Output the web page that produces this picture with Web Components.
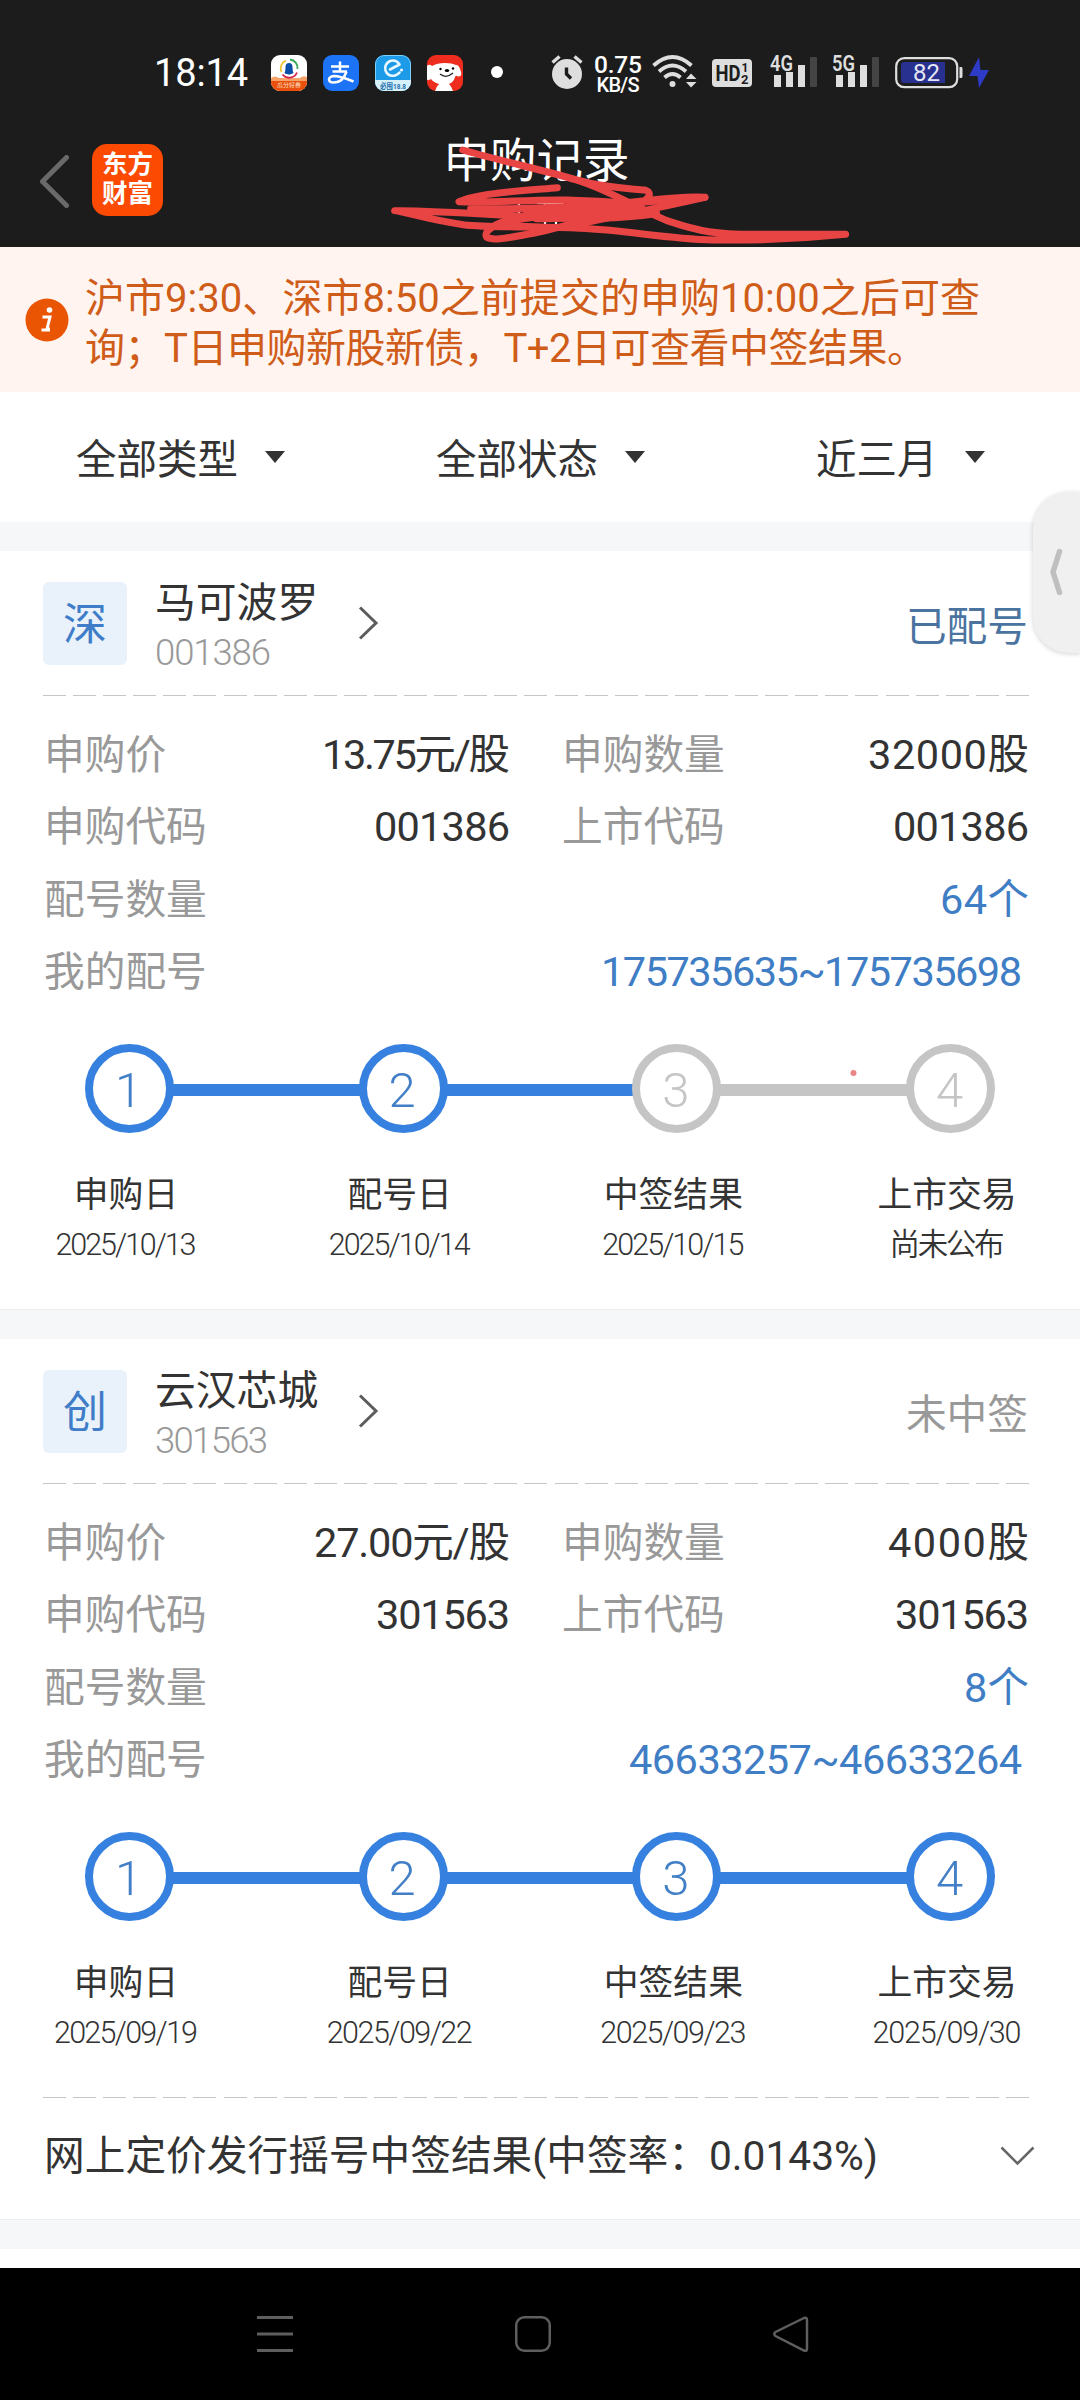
<!DOCTYPE html>
<html lang="zh-CN">
<head>
<meta charset="utf-8">
<title>申购记录</title>
<style>
    body {
        margin: 0;
        width: 1080px;
        height: 2400px;
        overflow: hidden;
        position: relative;
        background: #fff;
        color: #333;
        font-family: Roboto, "Noto Sans CJK SC", sans-serif;
    }
</style>
</head>
<body>
<status-bar></status-bar>
<app-header>申购记录</app-header>
<notice-bar>
    <fit-text w="895">沪市9:30、深市8:50之前提交的申购10:00之后可查</fit-text>
    <fit-text w="842">询；T日申购新股新债，T+2日可查看中签结果。</fit-text>
</notice-bar>
<filter-bar>
    <filter-item style="margin-left: 76px">全部类型</filter-item>
    <filter-item style="margin-left: 151px">全部状态</filter-item>
    <filter-item style="margin-left: 171px">近三月</filter-item>
</filter-bar>
<stock-card market="深" code="001386" code-width="116" status="已配号" status-color="#4a749f">
    马可波罗
    <field-item slot="fields" label="申购价"><fit-text w="188">13.75元/股</fit-text></field-item>
    <field-item slot="fields" label="申购数量"><fit-text w="161">32000股</fit-text></field-item>
    <field-item slot="fields" label="申购代码"><fit-text w="136">001386</fit-text></field-item>
    <field-item slot="fields" label="上市代码"><fit-text w="136">001386</fit-text></field-item>
    <field-item slot="fields" label="配号数量" wide><fit-text w="89">64个</fit-text></field-item>
    <field-item slot="fields" label="我的配号" wide inset><fit-text w="421">175735635~175735698</fit-text></field-item>
    <step-item slot="steps" number="1" label="申购日" line><fit-text w="141">2025/10/13</fit-text></step-item>
    <step-item slot="steps" number="2" label="配号日" line><fit-text w="142">2025/10/14</fit-text></step-item>
    <step-item slot="steps" number="3" label="中签结果" line pending><fit-text w="142">2025/10/15</fit-text></step-item>
    <step-item slot="steps" number="4" label="上市交易" pending><fit-text w="115">尚未公布</fit-text></step-item>
</stock-card>
<stock-card market="创" code="301563" code-width="113" status="未中签" status-color="#999">
    云汉芯城
    <field-item slot="fields" label="申购价"><fit-text w="196">27.00元/股</fit-text></field-item>
    <field-item slot="fields" label="申购数量"><fit-text w="141">4000股</fit-text></field-item>
    <field-item slot="fields" label="申购代码"><fit-text w="134">301563</fit-text></field-item>
    <field-item slot="fields" label="上市代码"><fit-text w="134">301563</fit-text></field-item>
    <field-item slot="fields" label="配号数量" wide><fit-text w="65">8个</fit-text></field-item>
    <field-item slot="fields" label="我的配号" wide inset><fit-text w="393">46633257~46633264</fit-text></field-item>
    <step-item slot="steps" number="1" label="申购日" line><fit-text w="144">2025/09/19</fit-text></step-item>
    <step-item slot="steps" number="2" label="配号日" line><fit-text w="146">2025/09/22</fit-text></step-item>
    <step-item slot="steps" number="3" label="中签结果" line><fit-text w="146">2025/09/23</fit-text></step-item>
    <step-item slot="steps" number="4" label="上市交易"><fit-text w="149">2025/09/30</fit-text></step-item>
    <result-row slot="footer"><fit-text w="834">网上定价发行摇号中签结果(中签率：0.0143%)</fit-text></result-row>
</stock-card>
<nav-bar></nav-bar>
<side-tab></side-tab>
<red-marks></red-marks>

<script>
// small helper, every element does the same thing
function define (name, html, setup) {
    const template = document.createElement ("template");
    template.innerHTML = html;
    customElements.define (name, class extends HTMLElement {
        constructor () {
            super ();
            this.attachShadow ({mode: "open"});
            this.shadowRoot.appendChild (template.content.cloneNode (true));
        }

        connectedCallback () {
            if (setup) setup (this, this.shadowRoot);
        }
    });
}

define ("status-bar", `
<style>
    :host {
        display: flex;
        height: 100px;
        padding: 44px 0 0 154px;
        box-sizing: border-box;
        background: #1c1c1c;
        color: #fff;
        align-items: flex-start;
    }
    .time { width: 117px; font-size: 38px; line-height: 58px; }
    .apps { display: flex; gap: 16px; margin-top: 11px; }
    .dot { width: 12px; height: 12px; border-radius: 50%; background: #fff; margin: 22px 48px 0 28px; }
    .speed { display: flex; flex-direction: column; align-items: center; width: 48px; margin: 9px 0 0 9px; font-weight: 500; }
    .speed span:first-child { font-size: 24.5px; line-height: 23px; }
    .speed span:last-child { font-size: 20px; line-height: 19px; }
    .alarm { margin-top: 10px; }
    .wifi { margin: 9px 0 0 10px; }
    .hd { margin: 15px 0 0 14px; }
    .signal { margin: 10px 0 0 18px; }
    .signal + .signal { margin-left: 14px; }
    .battery { margin: 11px 0 0 15px; }
    .bolt { margin: 13px 0 0 6px; }
    svg { display: block; flex: none; overflow: visible; }
</style>
<div class="time"><fit-text w="94">18:14</fit-text></div>
<div class="apps">
    <svg width="36" height="36" viewBox="0 0 36 36">
        <clipPath id="a"><rect width="36" height="36" rx="9"/></clipPath>
        <g clip-path="url(#a)">
            <rect width="36" height="36" fill="#fff"/>
            <path d="M0 23Q4 20 8 23L29 23Q32 20 36 22V36H0Z" fill="#f4a36b"/>
            <path d="M0 26H36V36H0Z" fill="#e9500d"/>
            <g fill="none" stroke-width="1.800">
                <path d="M10.500 17A8.500 8.500 0 0 1 15 5.500" stroke="#f1c232"/>
                <path d="M19 4.500A8.500 8.500 0 0 1 26.500 14" stroke="#39a85b"/>
                <path d="M11.500 19.500A8.500 8.500 0 0 0 26 17.500" stroke="#d9264b"/>
            </g>
            <path d="M13.500 18Q14.500 16 14.500 12Q14.500 8 18 8T21.500 12Q21.500 16 22.500 18Q21 19 20 19Q18 20 16 19Q14 19 13.500 18Z" fill="#0b4ea8"/>
            <text x="18" y="32" font-size="6" fill="#ffe2c8" text-anchor="middle">瓜分好券</text>
        </g>
    </svg>
    <svg width="36" height="36" viewBox="0 0 36 36">
        <rect width="36" height="36" rx="9" fill="#1d73f5"/>
        <g fill="none" stroke="#fff" stroke-width="2.500">
            <path d="M8 11.500H26M17 6.500V17M9.500 16.500H24"/>
            <path d="M23.500 16.500Q20 27.500 11 27.500Q6 27.500 6 24.500Q6.500 21 12 21Q18 21.500 30.500 26.500"/>
        </g>
    </svg>
    <svg width="36" height="36" viewBox="0 0 36 36">
        <clipPath id="b"><rect width="36" height="36" rx="9"/></clipPath>
        <g clip-path="url(#b)">
            <rect width="36" height="36" fill="#1d9be8"/>
            <rect x=".5" y=".5" width="35" height="35" rx="8.500" fill="none" stroke="#7fd0f6"/>
            <rect y="25" width="36" height="11" fill="#d7f1fb"/>
            <path d="M15 14.500L24.500 9.500Q21 4 15 6Q9 9 10.500 15.500Q13 22 20 20.500Q23 19.500 24.500 17.500" fill="none" stroke="#e9f8ff" stroke-width="2.600" stroke-linecap="round" stroke-linejoin="round"/>
            <circle cx="26.500" cy="15" r="1.600" fill="#e9f8ff"/>
            <text x="5" y="33.500" font-size="8" font-weight="700" fill="#1b6fae" textLength="26" lengthAdjust="spacingAndGlyphs">必囤18.8</text>
        </g>
    </svg>
    <svg width="36" height="36" viewBox="0 0 36 36">
        <clipPath id="c"><rect width="36" height="36" rx="9"/></clipPath>
        <g clip-path="url(#c)">
            <rect width="36" height="36" fill="#ee2d1e"/>
            <path d="M8 36Q9 32 12 29Q6 27 4 24Q0 27-1 22V12Q2 8 5 11Q10 8 18 8Q25 8 29 10Q32 9 34 17Q35 22 31 21.500Q29 20 28 22Q27 27 22 29Q25 32 26 36Z" fill="#fff"/>
            <circle cx="13.500" cy="14" r="1.200"/><circle cx="26" cy="13.500" r="1.200"/>
            <ellipse cx="20" cy="15.500" rx="2.200" ry="1.600"/>
            <path d="M13 19Q19 24 26 18" fill="none" stroke="#222" stroke-width="1.200"/>
        </g>
    </svg>
</div>
<div class="dot"></div>
<svg class="alarm" width="34" height="36" viewBox="0 0 34 36">
    <circle cx="16" cy="20" r="15" fill="#dedede"/>
    <path d="M1.500 8.500L8.500 2.500M23.500 2.500L30.500 8.500" stroke="#dedede" stroke-width="3.400"/>
    <path d="M15.500 13.500V20L20 24.500" fill="none" stroke="#1c1c1c" stroke-width="3.400"/>
</svg>
<div class="speed"><span><fit-text w="48">0.75</fit-text></span><span><fit-text w="43">KB/S</fit-text></span></div>
<svg class="wifi" width="46" height="36" viewBox="0 0 46 36">
    <g fill="none" stroke="#dedede" stroke-width="3.800">
        <path d="M1.500 12.500Q20.500-4.500 39.500 12.500"/>
        <path d="M7 18.500Q20.500 6.500 34 18.500"/>
        <path d="M12.500 24.500Q20.500 17.500 28.500 24.500"/>
    </g>
    <circle cx="20.500" cy="31" r="3" fill="#dedede"/>
    <path d="M34 26L39 20.500L44.500 26ZM34 29L39 34.500L44.500 29Z" fill="#dedede"/>
</svg>
<svg class="hd" width="40" height="28" viewBox="0 0 40 28">
    <rect width="40" height="28" rx="4" fill="#dedede"/>
    <text x="3.500" y="22" font-size="22" font-weight="700" fill="#1c1c1c" textLength="25" lengthAdjust="spacingAndGlyphs">HD</text>
    <text x="29.500" y="13" font-size="12" font-weight="700" fill="#1c1c1c">1</text>
    <text x="29" y="24.500" font-size="13" font-weight="700" fill="#1c1c1c">2</text>
</svg>
<svg class="signal" width="48" height="36" viewBox="0 0 48 36">
    <text x="0" y="16.500" font-size="21.500" font-weight="600" fill="#dedede" textLength="23" lengthAdjust="spacingAndGlyphs">4G</text>
    <path d="M4 21H11V33H4ZM16 18H23V33H16ZM28 11H35V33H28Z" fill="#dedede"/>
    <rect x="40" y="3" width="7" height="30" rx="1" fill="#444"/>
</svg>
<svg class="signal" width="48" height="36" viewBox="0 0 48 36">
    <text x="0" y="16.500" font-size="21.500" font-weight="600" fill="#dedede" textLength="23" lengthAdjust="spacingAndGlyphs">5G</text>
    <path d="M4 21H11V33H4ZM16 18H23V33H16ZM28 11H35V33H28Z" fill="#dedede"/>
    <rect x="40" y="3" width="7" height="30" rx="1" fill="#444"/>
</svg>
<svg class="battery" width="68" height="34" viewBox="0 0 68 34">
    <rect x="1.200" y="3.200" width="61" height="29" rx="8" fill="none" stroke="#dedede" stroke-width="2.200"/>
    <path d="M9 7H50V28H9Q6 28 6 25V10Q6 7 9 7Z" fill="#28318f"/>
    <path d="M64.500 12H66.500Q67.500 12 67.500 14V21Q67.500 23 66.500 23H64.500Z" fill="#dedede"/>
    <text x="31.500" y="26" font-size="24" fill="#e6e6f4" text-anchor="middle">82</text>
</svg>
<svg class="bolt" width="20" height="32" viewBox="0 0 20 32"><path d="M10 0L0 19H8.500L10 31L20 13H11.500Z" fill="#2d3bc6"/></svg>
`);

define ("app-header", `
<style>
    :host {
        display: grid;
        grid-template-columns: 163px 1fr 163px;
        height: 147px;
        background: #1c1c1c;
        color: #fff;
    }
    .left { display: flex; padding: 44px 0 0 40px; box-sizing: border-box; }
    .left > svg { margin: 11px 22px 0 0; flex: none; }
    .logo {
        flex: none;
        width: 71px;
        height: 72px;
        border-radius: 15px;
        background: #fd4a02;
        display: flex;
        flex-direction: column;
        justify-content: center;
        padding-bottom: 2px;
        box-sizing: border-box;
        font: bold 25.500px/29.500px Roboto, "Noto Sans CJK SC", sans-serif;
        text-align: center;
    }
    .title { text-align: center; font-size: 46.500px; line-height: 60px; padding: 31px 7px 0 0; }
    /* account name, mostly hidden by the red pen */
    .account { display: block; margin: 10px auto 0; }
</style>
<div class="left">
    <svg width="30" height="54" viewBox="0 0 30 54"><path d="M26.500 2.500L2.500 26.500L26.500 50.500" fill="none" stroke="#696969" stroke-width="5" stroke-linecap="round" stroke-linejoin="round"/></svg>
    <div class="logo"><span>东方</span><span>财富</span></div>
</div>
<div>
    <div class="title"><slot></slot></div>
    <svg class="account" width="64" height="26" viewBox="2 0 64 26"><path d="M0 2H26M0 13H25M13 2V24M31 2H58M39 2V25M50 2V25M31 13H58" stroke="#fff" stroke-width="2.200"/></svg>
</div>
`);

define ("notice-bar", `
<style>
    :host {
        display: flex;
        align-items: center;
        height: 145px;
        background: #fff4ef;
        color: #cf5c18;
        font-size: 40px;
        line-height: 50px;
    }
    svg { margin: 0 16px 0 25px; flex: none; }
    .text { display: flex; flex-direction: column; align-items: flex-start; padding-top: 8px; }
</style>
<svg width="44" height="44" viewBox="0 0 44 44">
    <circle cx="22" cy="22" r="21.500" fill="#ea5504"/>
    <circle cx="24.500" cy="12" r="2.800" fill="#fff"/>
    <path d="M17.500 19H25L22 31H25M16.500 32H25" fill="none" stroke="#fff" stroke-width="3"/>
</svg>
<div class="text"><slot></slot></div>
`);

define ("filter-bar", `
<style>
    :host { display: flex; height: 130px; border-bottom: 29px solid #f6f7f9; align-items: center; }
</style>
<slot></slot>
`);

define ("filter-item", `
<style>
    :host { display: flex; align-items: center; font-size: 40.500px; line-height: 50px; white-space: nowrap; }
    span { padding-top: 5px; }
    i { border: 10px solid transparent; border-top: 12px solid #333; border-bottom: 0; margin-left: 27px; }
</style>
<span><slot></slot></span><i></i>
`);

define ("stock-card", `
<style>
    :host { display: block; background: #fff; }
    .head { display: flex; align-items: center; height: 144px; margin: 0 51px 0 43px; }
    .badge {
        width: 84px;
        height: 83px;
        border-radius: 6px;
        background: #e9f2fb;
        color: #3f7dc8;
        font-size: 44px;
        line-height: 86px;
        text-align: center;
    }
    .stock { margin-left: 28px; padding-top: 9px; font-size: 40.800px; line-height: 50px; }
    .code { color: #999; font-size: 36.500px; font-weight: 350; }
    .head svg { margin-left: 39px; }
    .status { margin-left: auto; margin-right: 1px; font-size: 40.700px; }
    .dash {
        height: 1px;
        margin: 0 51px 0 43px;
        background: repeating-linear-gradient(90deg, #c6c6c6 0 23px, transparent 23px 30.090px);
    }
    .fields {
        display: grid;
        grid-template-columns: 466px 467px;
        column-gap: 52px;
        grid-auto-rows: 72.500px;
        padding: 21.500px 0 0 44px;
    }
    .steps { display: flex; padding: 36.500px 85px 40px; }
    .gap { height: 29px; border-top: 1px solid #ebedee; background: #f6f7f9; }
</style>
<div class="head">
    <div class="badge"></div>
    <div class="stock">
        <div><slot></slot></div>
        <div class="code"><fit-text></fit-text></div>
    </div>
    <svg width="22" height="34" viewBox="0 0 22 34"><path d="M3 1.500L19 17L3 32.500" fill="none" stroke="#5c5c5c" stroke-width="3"/></svg>
    <div class="status"></div>
</div>
<div class="dash"></div>
<div class="fields"><slot name="fields"></slot></div>
<div class="steps"><slot name="steps"></slot></div>
<slot name="footer"></slot>
<div class="gap"></div>
`, (el, root) => {
    root.querySelector (".badge").textContent = el.getAttribute ("market");
    const code = root.querySelector (".code fit-text");
    code.setAttribute ("w", el.getAttribute ("code-width"));
    code.textContent = el.getAttribute ("code");
    const status = root.querySelector (".status");
    status.textContent = el.getAttribute ("status");
    status.style.color = el.getAttribute ("status-color");
});

define ("field-item", `
<style>
    :host { display: flex; justify-content: space-between; font-size: 40.700px; line-height: 75px; white-space: nowrap; }
    :host([wide]) { grid-column: 1 / -1; }
    :host([inset]) { padding-right: 7px; }
    .label { color: #999; }
    :host([wide]) .value { color: #3f7dc5; }
    .value { line-height: 74px; font-size: 41.500px; }
</style>
<span class="label"></span><span class="value"><slot></slot></span>
`, (el, root) => {
    root.querySelector (".label").textContent = el.getAttribute ("label");
});

define ("step-item", `
<style>
    :host { flex: 0 0 89px; min-width: 0; --on: #3681df; }
    :host([line]) { flex: 1; }
    .row { display: flex; align-items: center; }
    .circle {
        flex: none;
        width: 89px;
        height: 89px;
        box-sizing: border-box;
        border: 8.500px solid var(--on);
        border-radius: 50%;
        text-align: center;
        text-indent: -2px;
        font-size: 49px;
        font-weight: 350;
        line-height: 77px;
        color: #427fc6;
    }
    .line { display: none; flex: 1; height: 12px; margin: 3px -2px 0; background: var(--on); }
    :host([line]) .line { display: block; }
    :host([pending]) { --on: #c5c5c5; }
    :host([pending]) .circle { color: #c5c5c5; }
    .text { width: 180px; margin: 36px 0 0 -49px; text-align: center; line-height: 50px; font-size: 34.800px; }
    .date { font-size: 30.500px; font-weight: 350; line-height: 51px; margin-bottom: -1px; }
    .label { position: relative; top: 1px; }
</style>
<div class="row"><div class="circle"></div><div class="line"></div></div>
<div class="text"><div class="label"></div><div class="date"><slot></slot></div></div>
`, (el, root) => {
    root.querySelector (".circle").textContent = el.getAttribute ("number");
    root.querySelector (".label").textContent = el.getAttribute ("label");
});

define ("result-row", `
<style>
    :host { display: block; }
    .dash {
        height: 1px;
        margin: 0 51px 0 43px;
        background: repeating-linear-gradient(90deg, #c6c6c6 0 23px, transparent 23px 30.090px);
    }
    .row { display: flex; align-items: center; justify-content: space-between; height: 115px; padding: 0 45px 6px 44px; font-size: 40.700px; line-height: 50px; }
    svg { margin-top: 1px; }
</style>
<div class="dash"></div>
<div class="row">
    <slot></slot>
    <svg width="35" height="20" viewBox="0 0 35 20"><path d="M1.500 1.500L17.500 17.500L33.500 1.500" fill="none" stroke="#666" stroke-width="2.500"/></svg>
</div>
`);

define ("nav-bar", `
<style>
    :host {
        display: flex;
        gap: 222px;
        align-items: flex-start;
        height: 132px;
        margin-top: 19px;
        padding: 48px 0 0 257px;
        box-sizing: border-box;
        background: #000;
    }
    svg { fill: none; stroke: #5e5e5e; stroke-width: 2.500; }
</style>
<svg width="36" height="36" viewBox="0 0 36 36"><path d="M0 1.500H36M0 18H36M0 34.500H36" stroke-width="3"/></svg>
<svg width="36" height="36" viewBox="0 0 36 36"><rect x="1.250" y="1.250" width="33.500" height="33.500" rx="8"/></svg>
<svg width="36" height="36" viewBox="0 0 36 36"><path d="M31 2L2.500 16Q0 18 2.500 20L31 34.500Q34 35.500 34 33V4Q34 1 31 2Z"/></svg>
`);

// floating handle at the right edge of the screen
define ("side-tab", `
<style>
    :host {
        position: absolute;
        right: 0;
        top: 492px;
        width: 47px;
        height: 161px;
        display: flex;
        align-items: center;
        background: #f0f0f0;
        border-radius: 36px 0 0 36px;
        box-shadow: 0 1px 5px rgba(0, 0, 0, .18);
    }
    svg { margin: 0 0 1px 16px; }
</style>
<svg width="14" height="50" viewBox="0 0 14 50"><path d="M10.500 4.500L4 25L10.500 45.500" fill="none" stroke="#bfbfbf" stroke-width="5.500" stroke-linecap="round" stroke-linejoin="round"/></svg>
`);

define ("red-marks", `
<style>
    :host { position: absolute; left: 0; top: 0; }
    svg { display: block; }
</style>
<svg width="1080" height="1100" viewBox="0 0 1080 1100">
    <g transform="translate(380 120) scale(.3333)" fill="none" stroke="#e94444" stroke-width="21" stroke-linecap="round" stroke-linejoin="round">
        <path d="M248 90C360 122 520 158 590 180C700 215 810 285 870 305C960 335 1010 343 1120 343L1397 343C1250 358 1130 362 1000 360C850 356 740 330 600 325C480 318 350 325 250 314C160 302 90 280 44 272C180 270 460 293 570 295C700 296 780 290 830 280"/>
        <path d="M590 180C680 205 740 205 795 210C830 222 790 250 740 270C640 290 560 320 460 340C390 352 340 364 320 352C310 335 340 310 420 290C560 265 740 250 975 232C880 225 780 250 640 256C500 265 400 268 272 266"/>
        <path d="M532 203C430 212 290 220 237 245C330 250 440 238 560 240C640 242 700 246 750 250C650 265 550 272 440 280M975 232C830 265 700 290 560 320C520 328 470 318 345 316C400 290 560 285 700 272"/>
        <path d="M560 265C640 250 700 262 780 262C700 285 600 290 470 292" stroke-width="30"/>
    </g>
    <circle cx="853.500" cy="1073" r="3" fill="#e98585"/>
</svg>
`);

// spreads its text over a width of w pixels; defined last so that all sizes are known
define ("fit-text", `
<style>
    :host { display: inline-block; white-space: nowrap; vertical-align: top; }
</style>
<slot></slot>
`, (el) => {
    const w = parseFloat (el.getAttribute ("w"));
    const n = [...el.textContent].length;
    const spacing = (w - el.getBoundingClientRect ().width) / (n - 1);
    el.style.letterSpacing = spacing + "px";
    el.style.marginRight = -spacing + "px";
});
</script>
</body>
</html>
